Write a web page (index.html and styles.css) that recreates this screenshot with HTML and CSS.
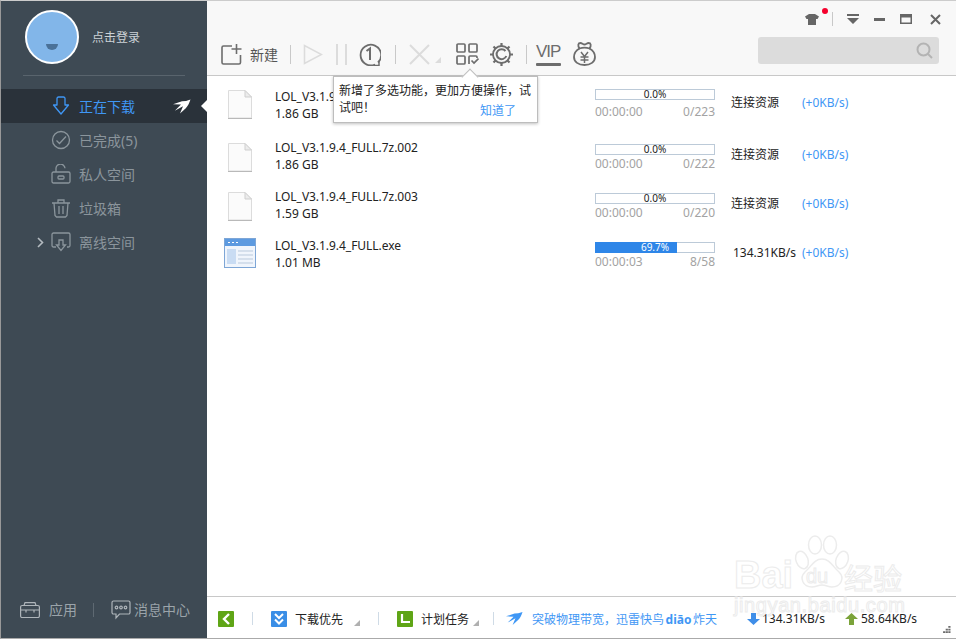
FILE: index.html
```html
<!DOCTYPE html>
<html lang="zh-CN">
<head>
<meta charset="utf-8">
<title>迅雷</title>
<link rel="stylesheet" href="styles.css">
</head>
<body>
<div class="window">
  <aside class="sidebar">
    <div class="profile">
      <div class="avatar"><svg width="16" height="10" viewBox="0 0 16 10"><path d="M2 1h12a6 6 0 0 1-12 0z" fill="#4a7198"/></svg></div>
      <span class="login">点击登录</span>
    </div>
    <div class="side-rule"></div>
    <nav class="nav">
      <div class="nav-item active">
        <svg class="nav-icon" width="20" height="20" viewBox="0 0 20 20" fill="none" stroke="#3f97f5" stroke-width="1.3"><path d="M6 2.5a1.5 1.5 0 0 1 1.5-1.5h5A1.5 1.5 0 0 1 14 2.500V9h3.500L10 18 2.500 9H6z" stroke-linejoin="round"/></svg>
        <span>正在下载</span>
        <svg class="swift" width="18" height="15" viewBox="0 0 18 15"><path d="M17.500.5L13 2 9 2.300 0 5.200 8 5.600 1.800 11.800 10 7.200 7 14.500 12.800 9.200C15 7 16.500 3.500 17.500.5z" fill="#fff"/></svg>
        <i class="caret"></i>
      </div>
      <div class="nav-item">
        <svg class="nav-icon" width="20" height="20" viewBox="0 0 20 20" fill="none" stroke="#8b959c" stroke-width="1.3"><circle cx="10" cy="10" r="8.500"/><path d="M5.500 10.500l3 3L15 6.500"/></svg>
        <span>已完成(5)</span>
      </div>
      <div class="nav-item">
        <svg class="nav-icon" width="20" height="20" viewBox="0 0 20 20" fill="none" stroke="#8b959c" stroke-width="1.3"><rect x="1" y="8" width="18" height="11" rx="1.500"/><path d="M5 8V5a4.500 4.500 0 0 1 9-.8"/><rect x="7" y="12" width="6" height="3" rx="1"/></svg>
        <span>私人空间</span>
      </div>
      <div class="nav-item">
        <svg class="nav-icon" width="20" height="20" viewBox="0 0 20 20" fill="none" stroke="#8b959c" stroke-width="1.3"><path d="M1 5h18M7 5V2h6v3M3 5l1 12.500 1.500 1.500h9l1.500-1.500L17 5M8 8v8M12 8v8"/></svg>
        <span>垃圾箱</span>
      </div>
      <div class="nav-item">
        <svg class="chev" width="7" height="11" viewBox="0 0 7 11" fill="none" stroke="#b4bbc0" stroke-width="1.600"><path d="M1 1l4.500 4.500L1 10"/></svg>
        <svg class="nav-icon" width="20" height="20" viewBox="0 0 20 20" fill="none" stroke="#8b959c" stroke-width="1.300"><path d="M5 15H2.500A1.500 1.500 0 0 1 1 13.500v-11A1.500 1.500 0 0 1 2.500 1h15A1.500 1.500 0 0 1 19 2.500v11a1.500 1.500 0 0 1-1.500 1.500H16"/><path d="M8 8h4v5h2.500L10 18.500 5.500 13H8z"/></svg>
        <span>离线空间</span>
      </div>
    </nav>
    <div class="side-foot">
      <svg width="20" height="16" viewBox="0 0 20 16" fill="none" stroke="#aeb5ba" stroke-width="1.200"><rect x=".6" y="3.500" width="18.800" height="12" rx="1.500"/><path d="M4 3.500L5 .6h10l1 2.900M.6 8h18.800M6 8v2.500M14 8v2.500"/></svg>
      <span class="foot-app">应用</span>
      <i class="foot-sep"></i>
      <svg class="foot-chat" width="20" height="20" viewBox="0 0 20 20" fill="none" stroke="#aeb5ba" stroke-width="1.200"><path d="M2.500 1h15A1.500 1.500 0 0 1 19 2.500v10a1.500 1.500 0 0 1-1.500 1.500H8.500L5 18v-4H2.500A1.500 1.500 0 0 1 1 12.500v-10A1.500 1.500 0 0 1 2.500 1z"/><circle cx="5.500" cy="7.500" r="1.300"/><circle cx="10" cy="7.500" r="1.300"/><circle cx="14.500" cy="7.500" r="1.300"/></svg>
      <span class="foot-msg">消息中心</span>
    </div>
  </aside>

  <main class="main">
    <header class="topbar">
      <div class="win-controls">
        <span class="shirt">
          <svg width="14" height="11" viewBox="0 0 14 11"><path d="M4 0h6l4 2.500L12.500 5H11v6H3V5H1.500L0 2.500z" fill="#666"/></svg>
          <i class="dot"></i>
        </span>
        <i class="ctl-sep"></i>
        <svg class="ctl-menu" width="12" height="10" viewBox="0 0 12 10"><path d="M0 0h12v2H0zM0 4h12L6 10z" fill="#666"/></svg>
        <svg class="ctl-min" width="11" height="3" viewBox="0 0 11 3"><path d="M0 0h11v3H0z" fill="#666"/></svg>
        <svg class="ctl-max" width="12" height="10" viewBox="0 0 12 10"><path d="M0 0h12v10H0zM1.500 3.500V8.500h9V3.500z" fill="#666" fill-rule="evenodd"/></svg>
        <svg class="ctl-close" width="11" height="11" viewBox="0 0 11 11" fill="none" stroke="#666" stroke-width="2"><path d="M1 1l9 9M10 1l-9 9"/></svg>
      </div>
      <div class="tools">
        <svg class="t-new" width="21" height="21" viewBox="0 0 21 21" fill="none" stroke="#6d6d6d" stroke-width="1.600"><path d="M11 2H2.500a1.500 1.500 0 0 0-1.500 1.500v15a1.500 1.500 0 0 0 1.500 1.500H18a1.500 1.500 0 0 0 1.500-1.500V11"/><path d="M15.500 0v10M10.500 5h10"/></svg>
        <span class="t-label">新建</span>
        <i class="t-sep s1"></i>
        <svg class="t-play" width="20" height="21" viewBox="0 0 20 21" fill="none" stroke="#dcdcdc" stroke-width="1.600"><path d="M1.500 1.500v18l17-9z"/></svg>
        <svg class="t-pause" width="11" height="21" viewBox="0 0 11 21" fill="none" stroke="#dcdcdc" stroke-width="2"><path d="M1 0v21M10 0v21"/></svg>
        <svg class="t-one" width="23" height="23" viewBox="0 0 23 23" fill="none" stroke="#6d6d6d" stroke-width="1.800"><path d="M20 19.500a10.300 10.300 0 1 0-3 2"/><path d="M16 22.500h5v-4.500" stroke-width="1.500"/><path d="M8.500 8l3.500-2.500V17" stroke-width="2"/></svg>
        <i class="t-sep s2"></i>
        <svg class="t-x" width="21" height="21" viewBox="0 0 21 21" fill="none" stroke="#dcdcdc" stroke-width="2"><path d="M1 1l19 19M20 1L1 20"/></svg>
        <svg class="t-tri" width="6" height="6" viewBox="0 0 6 6"><path d="M6 0v6H0z" fill="#dcdcdc"/></svg>
        <svg class="t-grid" width="23" height="22" viewBox="0 0 23 22" fill="none" stroke="#6d6d6d" stroke-width="1.700"><rect x="1" y="1" width="8" height="8" rx="1"/><rect x="13" y="1" width="8" height="8" rx="1"/><rect x="1" y="13" width="8" height="8" rx="1"/><path d="M13 21v-7a1 1 0 0 1 1-1h6a1 1 0 0 1 1 1v1"/><path d="M15.500 17.500l2.500 2.500 4.500-4.500"/></svg>
        <svg class="t-gear" width="23" height="23" viewBox="0 0 23 23" fill="none" stroke="#6d6d6d"><circle cx="11.500" cy="11.500" r="8.500" stroke-width="1.800"/><path d="M15.500 8a5 5 0 1 0 .8 5" stroke-width="2"/><path d="M11.500 0v3M11.500 20v3M0 11.500h3M20 11.500h3M3.500 3.500l2 2M17.500 17.500l2 2M19.500 3.500l-2 2M5.500 17.500l-2 2" stroke-width="2.200"/></svg>
        <i class="t-sep s3"></i>
        <div class="t-vip"><span>VIP</span><i></i></div>
        <svg class="t-money" width="23" height="24" viewBox="0 0 23 24" fill="none" stroke="#6d6d6d" stroke-width="1.800"><path d="M6.500 6.500C3 8.500 1 11 1 15c0 5 4.500 8 10.500 8S22 20 22 15c0-4-2-6.500-5.500-8.500"/><path d="M6.500 6.500C4.500 3.500 5 1 7.500 1c1.500 0 2.500 1.500 4 1.500S14 1 15.500 1c2.500 0 3 2.500 1 5.500-3-1-7-1-10 0z"/><path d="M8 10l3.500 4.500L15 10M7.500 15h8M7.500 18h8M11.500 14.500V21" stroke-width="1.500"/></svg>
      </div>
      <div class="search">
        <svg width="17" height="17" viewBox="0 0 17 17" fill="none" stroke="#b3b3b3" stroke-width="2"><circle cx="7.500" cy="7.500" r="6"/><path d="M12 12l4 4"/></svg>
      </div>
    </header>

    <section class="list">
      <article class="row first">
        <div class="icon-cell"><svg class="file" width="26" height="29" viewBox="0 0 26 29"><path d="M1.500.5H18L24.500 7v21H1.500z" fill="#fbfbfb" stroke="#dcdcdc"/><path d="M18 .5V7h6.500z" fill="#ececec" stroke="#cfcfcf"/><path d="M1 28.500h24" stroke="#b9b9b9"/></svg></div>
        <div class="name-cell"><div class="name">LOL_V3.1.9.4_FULL.7z.001</div><div class="size">1.86 GB</div></div>
        <div class="prog-cell"><div class="bar"><span class="pct">0.0%</span></div><div class="meta"><span>00:00:00</span><span>0/223</span></div></div>
        <div class="status">连接资源</div><div class="boost">(+0KB/s)</div>
      </article>
      <article class="row">
        <div class="icon-cell"><svg class="file" width="26" height="29" viewBox="0 0 26 29"><path d="M1.500.5H18L24.500 7v21H1.500z" fill="#fbfbfb" stroke="#dcdcdc"/><path d="M18 .5V7h6.500z" fill="#ececec" stroke="#cfcfcf"/><path d="M1 28.500h24" stroke="#b9b9b9"/></svg></div>
        <div class="name-cell"><div class="name">LOL_V3.1.9.4_FULL.7z.002</div><div class="size">1.86 GB</div></div>
        <div class="prog-cell"><div class="bar"><span class="pct">0.0%</span></div><div class="meta"><span>00:00:00</span><span>0/222</span></div></div>
        <div class="status">连接资源</div><div class="boost">(+0KB/s)</div>
      </article>
      <article class="row">
        <div class="icon-cell"><svg class="file" width="26" height="29" viewBox="0 0 26 29"><path d="M1.500.5H18L24.500 7v21H1.500z" fill="#fbfbfb" stroke="#dcdcdc"/><path d="M18 .5V7h6.500z" fill="#ececec" stroke="#cfcfcf"/><path d="M1 28.500h24" stroke="#b9b9b9"/></svg></div>
        <div class="name-cell"><div class="name">LOL_V3.1.9.4_FULL.7z.003</div><div class="size">1.59 GB</div></div>
        <div class="prog-cell"><div class="bar"><span class="pct">0.0%</span></div><div class="meta"><span>00:00:00</span><span>0/220</span></div></div>
        <div class="status">连接资源</div><div class="boost">(+0KB/s)</div>
      </article>
      <article class="row">
        <div class="icon-cell"><svg class="exe" width="32" height="30" viewBox="0 0 32 30"><rect x=".5" y=".5" width="31" height="29" fill="#f0f5fc" stroke="#7ea6d6"/><rect x="1" y="1" width="30" height="7" fill="#5d9ae0"/><path d="M4 4.500h2M8 4.500h2M12 4.500h2" stroke="#fff"/><rect x="3" y="11" width="9" height="15" fill="#c9dcf3"/><path d="M14 13h15M14 17h15M14 21h15M14 25h15" stroke="#b9c9dc"/></svg></div>
        <div class="name-cell"><div class="name">LOL_V3.1.9.4_FULL.exe</div><div class="size">1.01 MB</div></div>
        <div class="prog-cell"><div class="bar"><i class="fill" style="width:69.7%"></i><span class="pct on">69.7%</span></div><div class="meta"><span>00:00:03</span><span>8/58</span></div></div>
        <div class="status speed">134.31KB/s</div><div class="boost">(+0KB/s)</div>
      </article>
      <div class="tip">
        <p>新增了多选功能，更加方便操作，试试吧！</p>
        <a class="tip-ok">知道了</a>
      </div>
    </section>

    <footer class="statusbar">
      <span class="badge green"><svg width="9" height="12" viewBox="0 0 9 12" fill="none" stroke="#fff" stroke-width="2.400"><path d="M7 1L2 6l5 5"/></svg></span>
      <i class="bar-sep b1"></i>
      <span class="badge blue"><svg width="10" height="12" viewBox="0 0 10 12" fill="none" stroke="#fff" stroke-width="2"><path d="M1 1l4 4 4-4M1 6.500l4 4 4-4"/></svg></span>
      <span class="bar-text t1">下载优先</span>
      <svg class="bar-tri" width="6" height="6" viewBox="0 0 6 6"><path d="M6 0v6H0z" fill="#b0b0b0"/></svg>
      <i class="bar-sep b2"></i>
      <span class="badge green"><svg width="10" height="10" viewBox="0 0 10 10" fill="none" stroke="#fff" stroke-width="2.200"><path d="M2 0v8h8"/></svg></span>
      <span class="bar-text t1">计划任务</span>
      <svg class="bar-tri t2" width="6" height="6" viewBox="0 0 6 6"><path d="M6 0v6H0z" fill="#b0b0b0"/></svg>
      <i class="bar-sep b3"></i>
      <svg class="bar-swift" width="17" height="15" viewBox="0 0 18 15"><path d="M17.500.5L13 2 9 2.300 0 5.200 8 5.600 1.800 11.800 10 7.200 7 14.500 12.800 9.200C15 7 16.500 3.500 17.500.5z" fill="#3f97f5"/></svg>
      <span class="promo">突破物理带宽，迅雷快鸟<b>diāo</b>炸天</span>
      <svg class="arrow a1" width="13" height="12" viewBox="0 0 13 12"><path d="M4 0h5v6h4l-6.500 6L0 6h4z" fill="#3f8ee8"/></svg>
      <span class="rate r1">134.31KB/s</span>
      <svg class="arrow a2" width="13" height="12" viewBox="0 0 13 12"><path d="M6.500 0L13 6H9v6H4V6H0z" fill="#7ba33a"/></svg>
      <span class="rate">58.64KB/s</span>
      <svg class="grip" width="8" height="7" viewBox="0 0 9 8"><path d="M6 0h2.500v2H6zM3 3h2.500v2H3zM6 3h2.500v2H6zM0 6h2.500v2H0zM3 6h2.500v2H3zM6 6h2.500v2H6z" fill="#6c6c6c"/></svg>
    </footer>
  </main>

  <div class="watermark">
    <div class="wm-top">
      <span class="wm-bai">Bai</span>
      <svg class="wm-paw" width="56" height="56" viewBox="0 0 56 56" fill="#fff" stroke="#ececec" stroke-width="1.500"><ellipse cx="8" cy="25" rx="6" ry="9" transform="rotate(-20 8 25)"/><ellipse cx="21" cy="10" rx="6.500" ry="9"/><ellipse cx="36" cy="10" rx="6.500" ry="9"/><ellipse cx="48" cy="25" rx="6" ry="9" transform="rotate(20 48 25)"/><path d="M28 24c8 0 11 8 17 13 6 6 2 15-7 15-4 0-6-2-10-2s-6 2-10 2c-9 0-13-9-7-15 6-5 9-13 17-13z"/></svg>
      <span class="wm-du">du</span>
      <span class="wm-cn">经验</span>
    </div>
    <div class="wm-url">jingyan.baidu.com</div>
  </div>
</div>
</body>
</html>
```

FILE: styles.css
```css
* { box-sizing: border-box; }
html, body { margin: 0; padding: 0; }
body { width: 956px; height: 639px; overflow: hidden; background: #fff; font-family: "Noto Sans", "Noto Sans CJK SC", sans-serif; font-size: 12px; color: #222; }
i { display: block; font-style: normal; }
svg { display: block; flex: none; }

.window { position: relative; display: flex; width: 956px; height: 639px; border-top: 1px solid #ccc; border-left: 1px solid #999; border-bottom: 1px solid #aaa; }

/* sidebar */
.sidebar { width: 206px; flex: none; display: flex; flex-direction: column; background: #3e4a54; }
.profile { display: flex; align-items: center; height: 72px; padding-left: 24px; }
.avatar { width: 54px; height: 54px; border-radius: 50%; border: 2px solid #fff; background: #82b6e9; display: flex; justify-content: center; padding-top: 31px; }
.login { margin-left: 13px; color: #ccd2d6; font-size: 12px; }
.side-rule { height: 1px; margin: 2px 22px 0; background: #59646d; }
.nav { margin-top: 13px; display: flex; flex-direction: column; }
.nav-item { position: relative; display: flex; align-items: center; height: 34px; padding-left: 50px; color: #8b959c; font-size: 14px; }
.nav-item span { margin-left: 8px; }
.nav-item.active { background: #2a323a; color: #3f97f5; }
.swift { position: absolute; left: 172px; top: 10px; }
.caret { position: absolute; right: 0; top: 11px; width: 0; height: 0; border: 6px solid transparent; border-right-color: #fff; border-left-width: 0; }
.chev { position: absolute; left: 36px; top: 12px; }
.side-foot { margin-top: auto; display: flex; align-items: center; height: 47px; padding: 0 0 10px 19px; color: #9ba4aa; font-size: 14px; }
.side-foot span { margin-bottom: 2px; }
.foot-app { margin-left: 9px; }
.foot-sep { width: 1px; height: 14px; background: #5e6972; margin-left: 16px; }
.foot-chat { margin-left: 17px; }
.foot-msg { margin-left: 3px; }

/* main */
.main { flex: 1; min-width: 0; display: flex; flex-direction: column; }
.topbar { position: relative; height: 75px; flex: none; background: #f8f8f8; border-bottom: 1px solid #c8c8c8; }
.win-controls { position: absolute; top: 11px; left: 598px; display: flex; align-items: center; height: 14px; }
.shirt { position: relative; display: block; }
.dot { position: absolute; left: 17px; top: -6px; width: 6px; height: 6px; border-radius: 50%; background: #f5002d; }
.ctl-sep { width: 1px; height: 14px; background: #c8c8c8; margin-left: 13px; }
.ctl-menu { margin-left: 14px; }
.ctl-min { margin-left: 15px; }
.ctl-max { margin-left: 15px; }
.ctl-close { margin-left: 18px; }

.tools { position: absolute; left: 14px; top: 41px; display: flex; align-items: center; height: 24px; color: #555; }
.t-label { margin-left: 8px; font-size: 14px; }
.t-sep { width: 1px; height: 19px; background: #c9c9c9; }
.s1 { margin-left: 12px; }
.t-play { margin-left: 12px; }
.t-pause { margin-left: 13px; }
.t-one { margin-left: 11px; }
.s2 { margin-left: 14px; }
.t-x { margin-left: 13px; }
.t-tri { margin: 12px 0 0 5px; }
.t-grid { margin-left: 15px; }
.t-gear { margin-left: 11px; }
.s3 { margin-left: 13px; }
.t-vip { margin-left: 9px; width: 25px; font-family: "Liberation Sans", sans-serif; font-size: 17px; line-height: 18px; color: #6d6d6d; letter-spacing: -1px; }
.t-vip span { display: block; }
.t-vip i { height: 3px; border-radius: 1px; background: #6d6d6d; margin-top: 2px; }
.t-money { margin-left: 12px; }
.search { position: absolute; left: 551px; top: 36px; width: 181px; height: 27px; border-radius: 3px; background: #dcdcdc; display: flex; justify-content: flex-end; align-items: center; padding-right: 6px; }

/* list */
.list { position: relative; flex: 1; background: #fff; }
.row { display: flex; height: 49px; padding-left: 17px; align-items: flex-start; }
.row.first { height: 54px; }
.icon-cell { width: 32px; height: 30px; margin-top: 13px; display: flex; justify-content: center; }
.first .icon-cell { margin-top: 14px; }
.row:last-of-type .icon-cell { margin-top: 10px; }
.name-cell { width: 320px; margin: 9px 0 0 19px; line-height: 17px; color: #222; }
.first .name-cell { margin-top: 12px; }
.name { letter-spacing: -.04px; }
.prog-cell { width: 120px; margin-top: 14px; }
.first .prog-cell { margin-top: 13px; }
.bar { position: relative; height: 11px; border: 1px solid #bccad8; background: #fff; }
.fill { position: absolute; left: -1px; top: -1px; height: 11px; background: #2e86e8; }
.pct { position: absolute; left: 0; right: 0; top: -3px; text-align: center; font-size: 10px; line-height: 15px; color: #222; }
.pct.on { color: #fff; }
.meta { display: flex; justify-content: space-between; color: #a3a3a3; line-height: 17px; }
.first .meta { margin-top: 3px; }
.status { width: 71px; margin: 16px 0 0 16px; line-height: 17px; color: #222; }
.first .status, .first .boost { margin-top: 18px; }
.status.speed { padding-left: 2px; }
.boost { margin-top: 16px; line-height: 17px; color: #3f97f5; }

.tip { position: absolute; left: 126px; top: 0; width: 205px; height: 47px; padding: 5px 5px 0 5px; background: #fff; border: 1px solid #bdbdbd; box-shadow: 0 1px 3px rgba(0,0,0,.25); line-height: 17px; color: #222; }
.tip::before { content: ""; position: absolute; left: 130px; top: -6px; width: 11px; height: 11px; background: #fff; border-left: 1px solid #bdbdbd; border-top: 1px solid #bdbdbd; transform: rotate(45deg); }
.tip p { position: relative; margin: 0; }
.tip-ok { position: absolute; left: 146px; top: 25px; color: #3f97f5; font-size: 12px; line-height: 17px; }

/* status bar */
.statusbar { height: 42px; flex: none; display: flex; align-items: center; padding: 2px 0 0 11px; background: #fff; border-top: 1px solid #c8c8c8; position: relative; }
.badge { width: 16px; height: 16px; border-radius: 1px; display: flex; align-items: center; justify-content: center; flex: none; }
.badge.green { background: #5fa516; }
.badge.blue { background: #3a8ee6; }
.bar-sep { width: 1px; height: 13px; background: #cfdbe6; }
.b1 { margin: 0 18px; }
.bar-text { margin-left: 8px; color: #222; }
.bar-tri { margin: 8px 0 0 11px; }
.bar-tri.t2 { margin-left: 4px; }
.b2 { margin: 0 18px; }
.b3 { margin: 0 12px 0 14px; }
.promo { margin-left: 9px; color: #3f97f5; white-space: nowrap; }
.promo b { margin: 0 1.5px; font-weight: 700; }
.a1 { position: absolute; left: 540px; top: 16px; }
.a2 { position: absolute; left: 638px; top: 16px; }
.rate { position: absolute; left: 654px; top: 13px; line-height: 17px; color: #222; }
.rate.r1 { left: 555px; }
.grip { position: absolute; left: 736px; top: 29px; }

/* watermark */
.watermark { position: absolute; left: 733px; top: 534px; width: 180px; pointer-events: none; color: #fff; -webkit-text-stroke: 1px #ececec; font-family: "Liberation Sans", sans-serif; }
.wm-top { position: relative; height: 60px; }
.wm-bai { position: absolute; left: 0; top: 20px; font-size: 38px; line-height: 40px; font-weight: 700; }
.wm-paw { position: absolute; left: 60px; top: 0; }
.wm-du { position: absolute; left: 72px; top: 30px; font-size: 20px; line-height: 22px; }
.wm-cn { position: absolute; left: 110px; top: 26px; font-size: 29px; line-height: 32px; font-family: "Noto Sans CJK SC", sans-serif; }
.wm-url { font-size: 20px; line-height: 20px; letter-spacing: .6px; white-space: nowrap; }
```
